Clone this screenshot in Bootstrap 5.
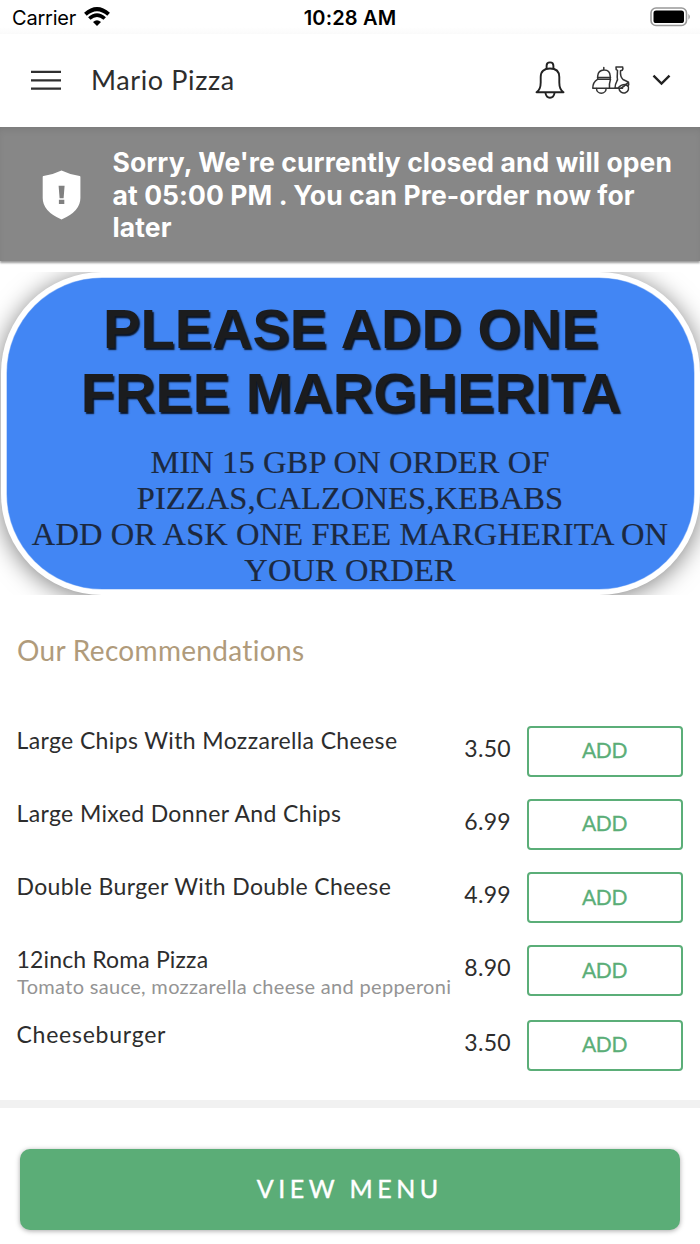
<!DOCTYPE html>
<html lang="en">
<head>
<meta charset="utf-8">
<meta name="viewport" content="width=device-width, initial-scale=1">
<title>Mario Pizza</title>
<link href="https://cdn.jsdelivr.net/npm/bootstrap@5.3.0/dist/css/bootstrap.min.css" rel="stylesheet">
<style>
  body { font-family: Lato, sans-serif; color: #2d2d2d; background: #fff; height: 1244px; overflow: hidden; }
  .status-bar { height: 34px; padding: 0 9px 0 12px; font: 20px/34px Inter, sans-serif; color: #000; background: linear-gradient(#fff 27px, #fafafa); }
  .status-bar > div { flex: 1 1 0; padding-top: 1px; }
  .status-bar .carrier { letter-spacing: -.2px; }
  .status-bar .clock { font-weight: 600; letter-spacing: .15px; margin: 0 1.5px 0 -1.5px; }
  .app-bar { height: 93px; padding: 0 28px 2px 31px; }
  .app-title { font-size: 27px; line-height: 40px; letter-spacing: .62px; margin-left: 30px; }
  .notice { height: 134px; background: #878787; color: #fff; padding: 19px 20px 0 42px; box-shadow: 0 2px 2px rgba(0,0,0,.4), inset 0 5px 8px -4px rgba(0,0,0,.12); }
  .notice p { font: 700 26.5px/32.5px Inter, sans-serif; letter-spacing: .09px; margin: 0 0 0 31.5px; white-space: nowrap; }
  .promo { height: 323px; margin-top: 11px; overflow: hidden; }
  .promo-panel { margin: 6px 6.5px 0; height: 311px; border-radius: 95px; background: #4286f4; box-shadow: 0 0 0 .6px #9fc2f8, 0 0 0 6px #fff, 0 3px 24px 6px rgba(0,0,0,.5); padding-top: 18.5px; text-align: center; color: #1b1c1e; }
  .promo-panel h1 { font: 700 56px/64px "Liberation Sans", sans-serif; margin: 0 -1px 19px 1px; text-shadow: 1.5px 1.5px 1.5px #0b1526; white-space: nowrap; }
  .promo-panel p { font: 32.5px/36px "Liberation Serif", serif; letter-spacing: .1px; margin: 0; color: #1c2940; -webkit-text-stroke: .2px #1c2940; white-space: nowrap; }
  .recs { height: 505px; padding: 34.500px 17px 0; }
  .recs h2 { font-size: 28px; line-height: 40px; letter-spacing: .32px; color: #b09b7b; margin: 0 0 56px; }
  .dish { height: 73.3px; }
  .dish.has-note { height: 74.3px; }
  .dish-name { font-size: 23px; line-height: 28px; letter-spacing: .37px; margin-left: -.5px; white-space: nowrap; }
  .dish-name.tight { letter-spacing: .15px; }
  .dish-name.loose { letter-spacing: .75px; }
  .dish-note { font-size: 20px; line-height: 26px; letter-spacing: .32px; color: #949494; white-space: nowrap; }
  .price { font-size: 23px; line-height: 44px; letter-spacing: .3px; margin-right: 16px; }
  .btn-add { width: 156px; height: 51px; border: 2px solid #5bae78; border-radius: 4px; color: #5bae78; background: #fff; font-size: 21px; letter-spacing: -.4px; line-height: 1; padding: 0 1px 3px 0; -webkit-text-stroke: .3px #5bae78; }
  .divider { height: 8px; background: #f1f1f1; }
  .btn-menu { margin: 41px 20.5px 0 20px; height: 81px; border: 0; border-radius: 10px; background: #5bad77; color: #fff; font-size: 25px; line-height: 1; letter-spacing: 4.5px; padding: 0 0 2px 0; box-shadow: 0 1px 5px rgba(0,0,0,.35); -webkit-text-stroke: .4px #fff; }
</style>
</head>
<body class="d-flex flex-column">
  <div class="status-bar d-flex">
    <div class="d-flex align-items-start gap-2"><span class="carrier">Carrier</span>
      <svg width="26" height="20" viewBox="0 0 26 20" style="margin-top:6px" fill="none" stroke="#000">
        <path d="M1.4 7.3Q13 -3 24.6 7.3" stroke-width="4"/>
        <path d="M5.3 11.5Q13 4.6 20.7 11.5" stroke-width="3.6"/>
        <path d="M13 19l-4-4.1q4-3.3 8 0z" fill="#000" stroke="none"/>
      </svg>
    </div>
    <div class="clock text-center">10:28 AM</div>
    <div class="d-flex justify-content-end">
      <svg width="41" height="20" viewBox="0 0 41 20" style="margin-top:6px">
        <rect x="1" y="1" width="35.500" height="17.500" rx="5" fill="#fff" stroke="#999" stroke-width="1.6"/>
        <rect x="3.500" y="3.500" width="30.500" height="12.500" rx="2.6" fill="#000"/>
        <path d="M38.500 6.700q2.500 3 0 6z" fill="#888"/>
      </svg>
    </div>
  </div>

  <header class="app-bar d-flex align-items-center">
    <svg width="30" height="20" viewBox="0 0 30 20" stroke="#2f2f2f" stroke-width="2.2"><path d="M0 1.9h30M0 10.3h30M0 18.7h30"/></svg>
    <div class="app-title me-auto">Mario Pizza</div>
    <svg width="30" height="38" viewBox="0 0 30 38" fill="none" stroke="#222" stroke-width="1.9" stroke-linejoin="round">
      <path d="M1.5 31.3h27q-4.200-2.700-4.200-9.800v-5.500q0-8.500-9.300-8.500t-9.300 8.500v5.500q0 7.100-4.200 9.800z"/>
      <path d="M11.600 7.800V4.700q0-3.300 3.400-3.300t3.400 3.300v3.100M10.400 31.600q.8 5.100 4.600 5.100t4.600-5.100"/>
    </svg>
    <svg width="40" height="30" viewBox="0 0 40 30" style="margin:0 20px 0 26px" fill="none" stroke="#333" stroke-width="1.500" stroke-linejoin="round" stroke-linecap="round">
      <path d="M6.700 14.200V11q.5-5.800 6.300-6t6.200 6v3.200M6.500 12.600h13M12.800 4.800V2.600"/>
      <path d="M6.500 14.300h13q-1.500 4.700-1 8.900H1.800q0-6.200 4.700-8.900z"/>
      <path d="M5.500 23.400a4.800 4.800 0 0 0 9.600 0M18.500 23.300h13"/>
      <path d="M25 1.900h6.600q.8 1.700-.4 3.300l-1.700.5q-.5 6 2.500 8.800 2.500 1 5.500 2.600.8 2.800-.6 3.900l-2.700-1.500q-4.500 0-7.200 3.800h-3q0-4 1.800-7 1.200-1.700.4-4L26.500 5.300l-1.300-.7z"/>
      <path d="M28 23.400a4.800 4.800 0 1 0 8.700-3M29.800 23.300q3.200-1.800 7.200-5.700"/>
    </svg>
    <svg width="21" height="14" viewBox="0 0 22 14" fill="none" stroke="#222" stroke-width="2.500"><path d="M2.600 2.500l8.400 8.300 8.400-8.300"/></svg>
  </header>

  <div class="notice d-flex align-items-start">
    <svg width="39" height="50" viewBox="0 0 39 50" class="flex-shrink-0" style="margin-top:23.500px">
      <path d="M19.500.4q9 4.300 18.200 5.700.7 0 .7 1V28q0 13.500-18.900 21.400Q.7 41.500.7 28V7.100q0-1 .7-1Q10.500 4.700 19.500.4z" fill="#fff"/>
      <path d="M16.600 15.800h6l-1 12.400h-4zM16.900 29.800h5.400v4.200h-5.400z" fill="#808080"/>
    </svg>
    <p>Sorry, We're currently closed and will open<br>at 05:00 PM . You can Pre-order now for<br>later</p>
  </div>

  <section class="promo flex-shrink-0">
    <div class="promo-panel">
      <h1>PLEASE ADD ONE<br>FREE MARGHERITA</h1>
      <p>MIN 15 GBP ON ORDER OF<br>PIZZAS,CALZONES,KEBABS<br>ADD OR ASK ONE FREE MARGHERITA ON<br>YOUR ORDER</p>
    </div>
  </section>

  <main class="recs flex-shrink-0">
    <h2 class="fw-normal">Our Recommendations</h2>
    <div class="dish d-flex align-items-start">
      <div class="me-auto dish-name">Large Chips With Mozzarella Cheese</div>
      <div class="price">3.50</div><button class="btn btn-add">ADD</button>
    </div>
    <div class="dish d-flex align-items-start">
      <div class="me-auto dish-name">Large Mixed Donner And Chips</div>
      <div class="price">6.99</div><button class="btn btn-add">ADD</button>
    </div>
    <div class="dish d-flex align-items-start">
      <div class="me-auto dish-name">Double Burger With Double Cheese</div>
      <div class="price">4.99</div><button class="btn btn-add">ADD</button>
    </div>
    <div class="dish has-note d-flex align-items-start">
      <div class="me-auto"><div class="dish-name tight">12inch Roma Pizza</div><div class="dish-note">Tomato sauce, mozzarella cheese and pepperoni</div></div>
      <div class="price">8.90</div><button class="btn btn-add">ADD</button>
    </div>
    <div class="dish d-flex align-items-start">
      <div class="me-auto dish-name loose">Cheeseburger</div>
      <div class="price">3.50</div><button class="btn btn-add">ADD</button>
    </div>
  </main>

  <div class="divider flex-shrink-0"></div>
  <button class="btn btn-menu flex-shrink-0">VIEW MENU</button>
<script src="https://cdn.jsdelivr.net/npm/bootstrap@5.3.0/dist/js/bootstrap.bundle.min.js"></script>
</body>
</html>
